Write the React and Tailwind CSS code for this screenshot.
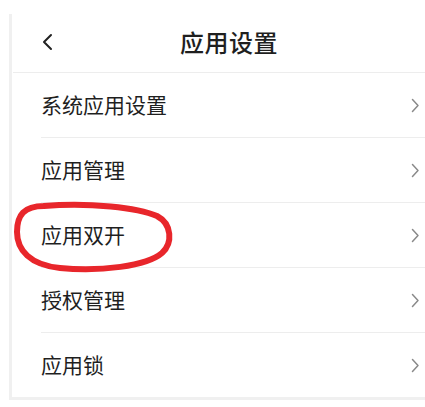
import React from "react";

const items = ["系统应用设置", "应用管理", "应用双开", "授权管理", "应用锁"];

const Chevron = () => (
  <svg width="9" height="15" viewBox="0 0 9 15" fill="none">
    <path d="M1.5 1.5 L7 7.5 L1.5 13.5" stroke="#8a8a8a" strokeWidth="1.5" strokeLinecap="round" strokeLinejoin="round" />
  </svg>
);

export default function App() {
  return (
    <div
      className="relative w-[425px] h-[407px] bg-white overflow-hidden text-[#1f1f1f]"
      style={{ fontFamily: '"Noto Sans CJK SC", "Noto Sans", sans-serif' }}
    >
      <div className="mt-[14px] ml-[9px] border-l-[3px] border-b-[3px] border-[#f0f0f0]">
        {/* Header */}
        <div className="relative h-[58px] flex items-center ml-[1px] border-b border-[#ededed] box-content">
          <div className="pl-[28px] pb-[2px]">
            <svg width="14" height="18" viewBox="0 0 14 18" fill="none">
              <path d="M10 2 L3 9 L10 16" stroke="#222" strokeWidth="2" strokeLinecap="round" strokeLinejoin="round" />
            </svg>
          </div>
          <div className="absolute left-[167px] top-0 h-full flex items-center pb-[2px] text-[24px] font-medium tracking-[0.5px]">
            应用设置
          </div>
        </div>

        {/* Rows */}
        <div className="pl-[29px]">
          {items.map((t, i) => (
            <div
              key={t}
              className={`h-[64px] flex items-center justify-between pr-[5px] ${i < items.length - 1 ? "border-b border-[#ededed] box-content" : ""}`}
            >
              <span className="text-[21px] leading-none pb-[1px]">{t}</span>
              <Chevron />
            </div>
          ))}
        </div>
      </div>

      {/* Red hand-drawn annotation */}
      <svg className="absolute inset-0 pointer-events-none" width="425" height="407" viewBox="0 0 425 407" fill="none">
        <path
          d="M44 206 C90 202, 138 208, 157 216 C172 224, 173 243, 162 253 C147 266, 100 272, 60 268 C30 265, 17 250, 17 232 C17 215, 24 206, 44 206"
          stroke="#e8262b"
          strokeWidth="6"
          strokeLinecap="round"
          strokeLinejoin="round"
        />
      </svg>
    </div>
  );
}
